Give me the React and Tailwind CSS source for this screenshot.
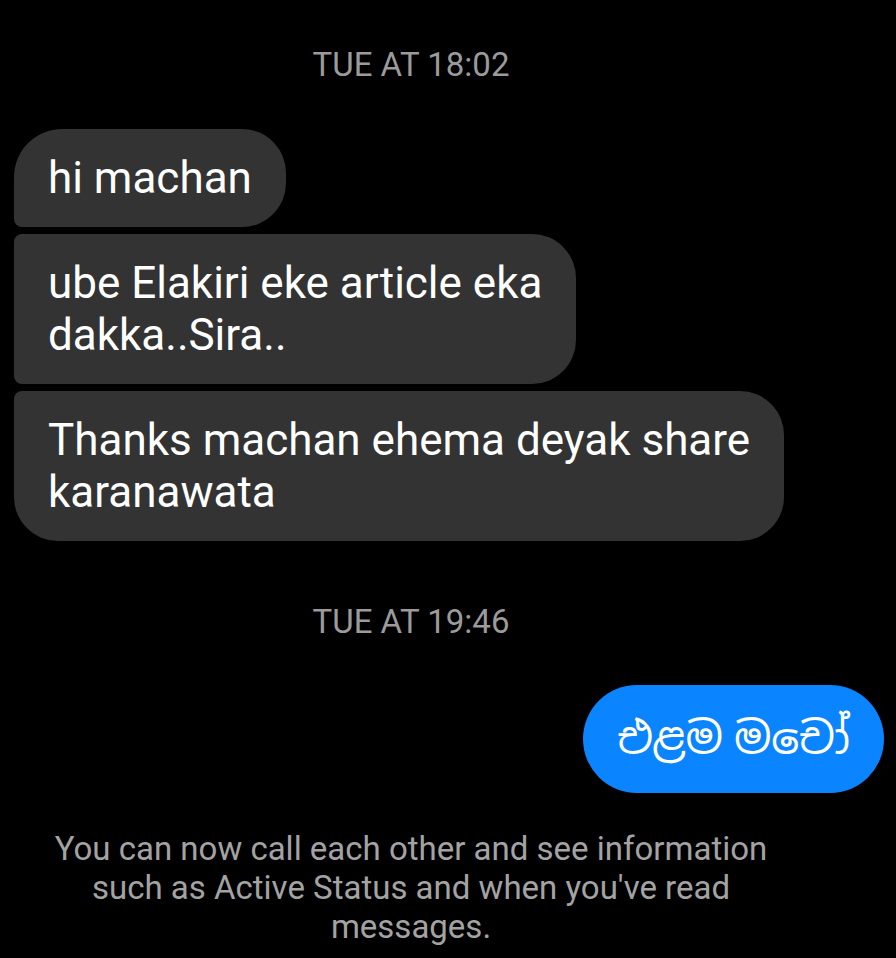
import React from 'react';

const incoming = [
  { lines: ['hi machan'], shape: 'rounded-tl-[48px] rounded-bl-[8px]' },
  { lines: ['ube Elakiri eke article eka', 'dakka..Sira..'], shape: 'rounded-tl-[8px] rounded-bl-[8px]' },
  { lines: ['Thanks machan ehema deyak share', 'karanawata'], shape: 'rounded-tl-[8px] rounded-bl-[44px]' },
];

const Timestamp = ({ children }) => (
  <div className="w-[822px] text-center text-[33px] leading-[38px] text-[#9b9b9b]">{children}</div>
);

const App = () => {
  return (
    <div
      className="w-[896px] h-[958px] bg-black overflow-hidden flex flex-col"
      style={{ fontFamily: 'Roboto, "Noto Sans", "Noto Sans Sinhala", sans-serif' }}
    >
      <div className="pt-[46px]">
        <Timestamp>TUE AT 18:02</Timestamp>
      </div>

      <div className="flex flex-col items-start gap-[7px] pl-[14px] mt-[45px]">
        {incoming.map((m, i) => (
          <div
            key={i}
            className={`bg-[#333333] text-white text-[44px] leading-[52px] px-[34px] py-[23px] whitespace-nowrap rounded-r-[44px] ${m.shape}`}
          >
            {m.lines.map((l, j) => (
              <div key={j}>{l}</div>
            ))}
          </div>
        ))}
      </div>

      <div className="mt-[62px]">
        <Timestamp>TUE AT 19:46</Timestamp>
      </div>

      <div className="flex justify-end pr-[12px] mt-[44px]">
        <div className="bg-[#0a84ff] text-white text-[44px] leading-[52px] px-[34px] py-[28px] rounded-full">
          එළම මචෝ
        </div>
      </div>

      <div className="w-[822px] flex justify-center mt-[36px]">
        <p className="max-w-[740px] text-center text-[33px] leading-[39px] text-[#a3a3a3]">
          You can now call each other and see information such as Active Status and when you've read messages.
        </p>
      </div>
    </div>
  );
};

export default App;
